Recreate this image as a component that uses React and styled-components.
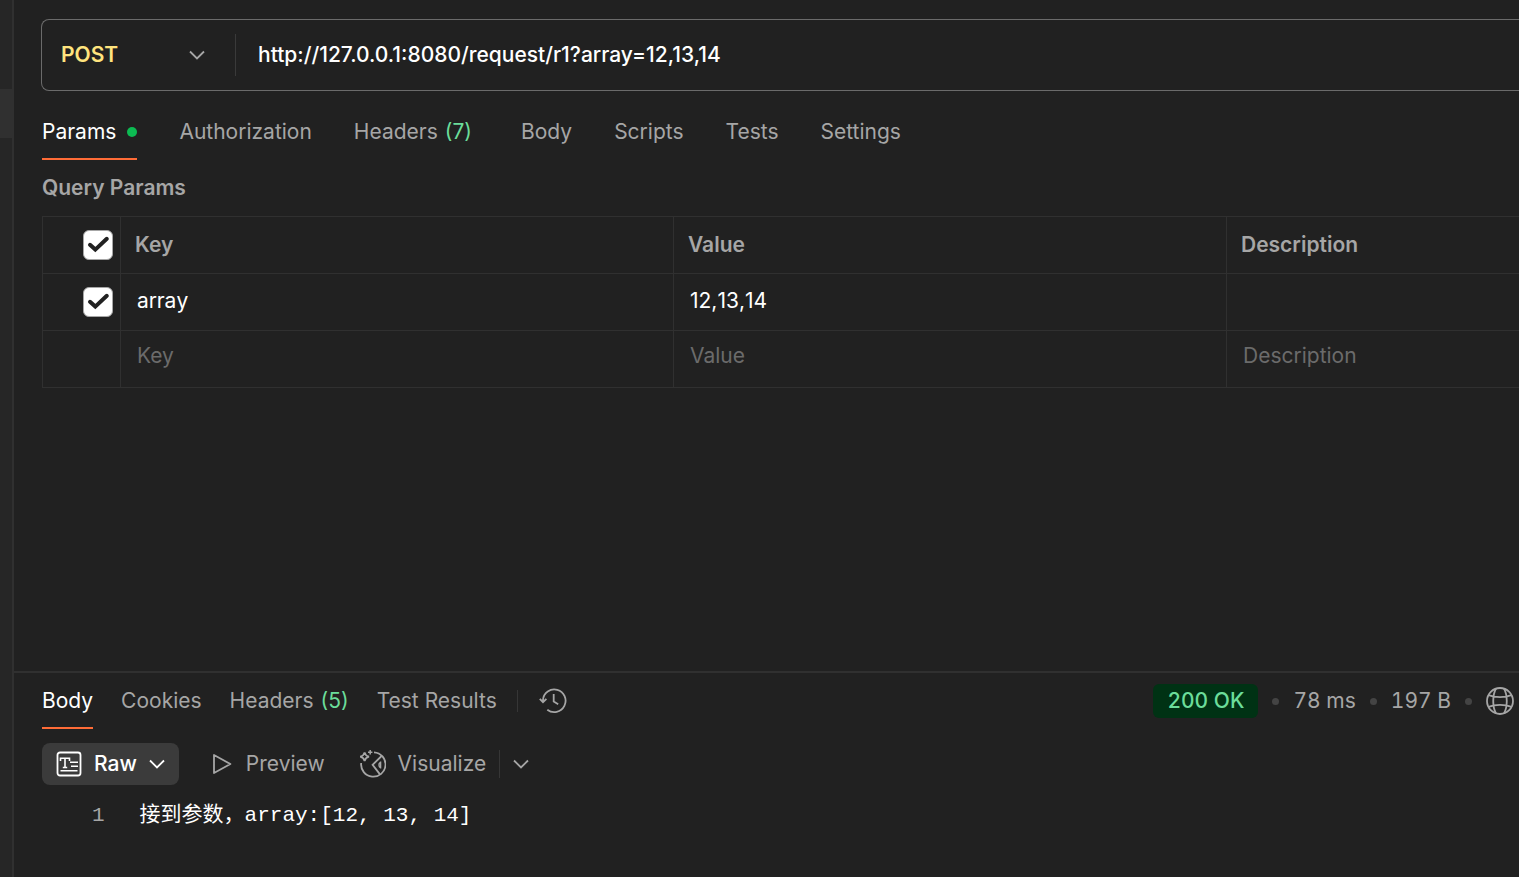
import React, { useState } from 'react';
import styled, { createGlobalStyle } from 'styled-components';

const c = {
  bg: '#212121',
  side: '#262626',
  sideActive: '#303030',
  line: '#303030',
  text: '#ffffff',
  muted: '#a6a6a6',
  faint: '#6b6b6b',
  green: '#6bdd9a',
  orange: '#ff6c37',
};

const GlobalStyle = createGlobalStyle`
  *, *::before, *::after { box-sizing: border-box; }
  body { margin: 0; background: ${c.bg}; color: ${c.text}; font-family: Inter, "Noto Sans CJK SC", sans-serif; font-size: 21px; line-height: 28px; }
  button, input, select { font: inherit; color: inherit; }
`;

const Page = styled.div`
  display: flex;
  min-height: 100vh;
  overflow: hidden;
`;

const Rail = styled.aside`
  flex: none;
  width: 14px;
  padding-top: 89px;
  background: ${c.side};
  border-right: 2px solid ${c.line};
`;

const RailItem = styled.div`
  height: 49px;
  background: ${c.sideActive};
`;

const Main = styled.main`
  flex: 1;
  min-width: 0;
  display: flex;
  flex-direction: column;
`;

const Request = styled.section`
  flex: 1;
  padding: 19px 0 0 28px;
`;

const UrlBar = styled.div`
  display: flex;
  align-items: center;
  height: 72px;
  margin-left: -1px;
  border: 1px solid #6b6b6b;
  border-right: 0;
  border-radius: 8px 0 0 8px;
`;

const MethodBox = styled.label`
  display: grid;
  flex: none;
  width: 194px;
  height: 42px;
  align-items: center;
  border-right: 1px solid #3a3a3a;
  & > * { grid-area: 1 / 1; }
  & > svg { justify-self: end; margin-right: 30px; pointer-events: none; }
`;

const MethodSelect = styled.select`
  appearance: none;
  width: 100%;
  height: 40px;
  padding: 0 0 0 19px;
  border: 0;
  outline: 0;
  background: transparent;
  color: #ffe47e;
  font-weight: 600;
`;

const UrlInput = styled.input`
  flex: 1;
  min-width: 0;
  height: 40px;
  padding: 0 0 1px 22px;
  border: 0;
  outline: 0;
  background: transparent;
  font-weight: 450;
`;

const Tabs = styled.nav`
  display: flex;
  align-items: stretch;
  gap: ${(p) => p.$gap}px;
`;

const Tab = styled.button`
  display: flex;
  align-items: center;
  gap: 7px;
  height: ${(p) => p.$height}px;
  padding: 0;
  border: 0;
  border-bottom: 2px solid ${(p) => (p.$active ? c.orange : 'transparent')};
  background: none;
  color: ${(p) => (p.$active ? c.text : c.muted)};
  white-space: nowrap;
  cursor: pointer;
`;

const RequestTabs = styled(Tabs)`
  margin-top: 14px;
`;

const ResponseTabs = styled(Tabs)`
  ${Tab} { padding-top: 2px; }
`;

const Count = styled.span`
  color: ${c.green};
`;

const ActiveDot = styled.span`
  width: 10px;
  height: 10px;
  margin-left: 4px;
  border-radius: 50%;
  background: #0cbb52;
`;

const Heading = styled.h2`
  margin: 14px 0;
  font-size: 21px;
  line-height: 28px;
  font-weight: 600;
  color: ${c.muted};
`;

const ParamTable = styled.table`
  width: 100%;
  table-layout: fixed;
  border-collapse: collapse;
  th, td { height: 57px; padding: 0; border: 1px solid ${c.line}; }
  tr > :last-child { border-right: 0; }
`;

const CheckCol = styled.col`
  width: 78px;
`;

const TextCol = styled.col`
  width: 553px;
`;

const HeadCell = styled.th`
  && { padding-left: 14px; }
  text-align: left;
  font-weight: 600;
  color: ${c.muted};
`;

const CellInput = styled.input`
  display: block;
  width: 100%;
  height: 56px;
  padding: 0 0 4px 16px;
  border: 0;
  outline: 0;
  background: transparent;
  font-kerning: none;
  &::placeholder { color: ${c.faint}; opacity: 1; }
`;

const EmptyInput = styled(CellInput)`
  padding-bottom: 8px;
  font-kerning: auto;
`;

const CheckLabel = styled.label`
  display: grid;
  width: 30px;
  margin-left: 40px;
  & > * { grid-area: 1 / 1; }
  & > svg { pointer-events: none; opacity: 0; }
  & > input:checked + svg { opacity: 1; }
`;

const CheckInput = styled.input`
  appearance: none;
  width: 30px;
  height: 30px;
  margin: 0;
  border: 1px solid #a6a6a6;
  border-radius: 6px;
  &:checked { background: #fff; }
`;

const Response = styled.section`
  height: 206px;
  padding-left: 28px;
  border-top: 2px solid ${c.line};
`;

const ResponseBar = styled.div`
  display: flex;
  align-items: stretch;
  justify-content: space-between;
  height: 56px;
`;

const BarGroup = styled.div`
  display: flex;
  align-items: center;
`;

const Divider = styled.span`
  width: 1px;
  height: ${(p) => p.$height}px;
  margin: 0 ${(p) => p.$after}px 0 ${(p) => p.$before}px;
  background: #363636;
`;

const IconButton = styled.button`
  display: flex;
  align-items: center;
  padding: 0;
  border: 0;
  background: none;
  color: ${c.muted};
  cursor: pointer;
`;

const Status = styled(BarGroup)`
  gap: 14px;
  padding-right: 5px;
  color: ${c.muted};
  font-variant-numeric: tabular-nums;
`;

const StatusBadge = styled.span`
  height: 34px;
  padding: 0 14px;
  border-radius: 6px;
  background: #003214;
  color: ${c.green};
  line-height: 34px;
  font-weight: 500;
`;

const Separator = styled.span`
  width: 7px;
  height: 7px;
  border-radius: 50%;
  background: #444;
`;

const ViewBar = styled.div`
  display: flex;
  align-items: center;
  height: 42px;
  margin-top: 14px;
`;

const ViewButton = styled.button`
  display: flex;
  align-items: center;
  gap: ${(p) => p.$gap}px;
  height: 42px;
  padding: 0 ${(p) => p.$pad}px;
  border: 0;
  border-radius: 8px;
  background: ${(p) => (p.$active ? '#3b3b3b' : 'none')};
  color: ${(p) => (p.$active ? c.text : c.muted)};
  font-weight: ${(p) => (p.$active ? 500 : 400)};
  cursor: pointer;
`;

const Code = styled.pre`
  display: flex;
  gap: 35px;
  margin: 17px 0 0;
  padding-left: 50px;
  font-family: "Liberation Mono", "Noto Sans CJK SC", monospace;
  font-size: 21px;
  line-height: 28px;
`;

const LineNumber = styled.span`
  color: ${c.muted};
`;

const CodeText = styled.code`
  font-family: inherit;
`;

const Svg = ({ w = 28, h = 28, children, ...rest }) => (
  <svg width={w} height={h} viewBox={`0 0 ${w} ${h}`} fill="none" stroke="currentColor" strokeWidth="1.8" aria-hidden="true" {...rest}>
    {children}
  </svg>
);

const Chevron = ({ color }) => (
  <Svg w={16} h={10} color={color}>
    <path d="M1 1.5 8 8.5 15 1.5" />
  </Svg>
);

const HistoryIcon = () => (
  <Svg>
    <path d="M4 14.5V13a11.3 11.3 0 1 1 4.3 9.7" />
    <path d="M.8 11.8 4 15.2 7.4 11.8M14.7 7v7.6l4.5 2.6" />
  </Svg>
);

const GlobeIcon = () => (
  <Svg>
    <circle cx="14" cy="14" r="13" />
    <path d="M10 1.6C6.3 8 6.3 20 10 26.4M18 1.6C21.7 8 21.7 20 18 26.4M2.6 8.2C9 10.8 19 10.8 25.4 8.2M2.6 19.8C9 17.2 19 17.2 25.4 19.8" />
  </Svg>
);

const RawIcon = () => (
  <Svg w={26} h={26}>
    <rect x="1.5" y="1.5" width="23" height="23" rx="2.5" />
    <path d="M4.5 10V7.2h9V10M9 7.2v9.3M6.8 16.5h4.4M14 11.3h8M15 15.2h7M4.5 19.8h17" strokeWidth="1.6" />
  </Svg>
);

const PlayIcon = () => (
  <Svg w={20} h={22}>
    <path d="M2 2v18L18.4 11Z" strokeLinejoin="round" />
  </Svg>
);

const VisualizeIcon = () => (
  <Svg>
    <path d="M16 2.3A12.2 12.2 0 1 1 3.2 13" />
    <path d="M23.6 6 14.6 14.8 22 24.4" />
    <path d="M22.6 11.6v6.8M22.6 12c-2.2 1.4-2.2 4.4 0 6" strokeWidth="1.4" />
    <path d="M6.6 2.4Q7.4 5.9 11 6.7 7.4 7.5 6.6 11 5.8 7.5 2.2 6.7 5.8 5.9 6.6 2.4Z" strokeWidth="1.8" />
    <path d="M12.2 0v4.4M10 2.2h4.4" strokeWidth="1.5" />
  </Svg>
);

const Checkbox = ({ label }) => (
  <CheckLabel>
    <CheckInput type="checkbox" defaultChecked aria-label={label} />
    <Svg w={30} h={30} color="#212121" strokeWidth="4">
      <path d="M7 14.8 12.3 19.6 23.8 8.8" strokeLinecap="round" />
    </Svg>
  </CheckLabel>
);

export default function App() {
  const [url, setUrl] = useState('http://127.0.0.1:8080/request/r1?array=12,13,14');
  return (
    <>
      <GlobalStyle />
      <Page>
        <Rail>
          <RailItem />
        </Rail>
        <Main>
          <Request>
            <UrlBar>
              <MethodBox>
                <MethodSelect aria-label="Method" defaultValue="POST">
                  <option>POST</option>
                </MethodSelect>
                <Chevron color={c.muted} />
              </MethodBox>
              <UrlInput aria-label="Request URL" value={url} onChange={(e) => setUrl(e.target.value)} />
            </UrlBar>
            <RequestTabs $gap={42}>
              <Tab $height={55} $active>
                Params <ActiveDot />
              </Tab>
              <Tab $height={55}>Authorization</Tab>
              <Tab $height={55}>
                Headers <Count>(7)</Count>
                <span />
              </Tab>
              <Tab $height={55}>Body</Tab>
              <Tab $height={55}>Scripts</Tab>
              <Tab $height={55}>Tests</Tab>
              <Tab $height={55}>Settings</Tab>
            </RequestTabs>
            <Heading>Query Params</Heading>
            <ParamTable>
              <colgroup>
                <CheckCol />
                <TextCol />
                <TextCol />
                <col />
              </colgroup>
              <thead>
                <tr>
                  <td><Checkbox label="Select all" /></td>
                  <HeadCell>Key</HeadCell>
                  <HeadCell>Value</HeadCell>
                  <HeadCell>Description</HeadCell>
                </tr>
              </thead>
              <tbody>
                <tr>
                  <td><Checkbox label="Use array" /></td>
                  <td><CellInput aria-label="Key" defaultValue="array" /></td>
                  <td><CellInput aria-label="Value" defaultValue="12,13,14" /></td>
                  <td><CellInput aria-label="Description" /></td>
                </tr>
                <tr>
                  <td />
                  <td><EmptyInput aria-label="New key" placeholder="Key" /></td>
                  <td><EmptyInput aria-label="New value" placeholder="Value" /></td>
                  <td><EmptyInput aria-label="New description" placeholder="Description" /></td>
                </tr>
              </tbody>
            </ParamTable>
          </Request>
          <Response>
            <ResponseBar>
              <BarGroup>
                <ResponseTabs $gap={28}>
                  <Tab $height={56} $active>Body</Tab>
                  <Tab $height={56}>Cookies</Tab>
                  <Tab $height={56}>
                    Headers <Count>(5)</Count>
                  </Tab>
                  <Tab $height={56}>Test Results</Tab>
                </ResponseTabs>
                <Divider $height={22} $before={20} $after={21} />
                <IconButton aria-label="History"><HistoryIcon /></IconButton>
              </BarGroup>
              <Status>
                <StatusBadge>200 OK</StatusBadge>
                <Separator />
                <span>78 ms</span>
                <Separator />
                <span>197 B</span>
                <Separator />
                <IconButton aria-label="Network"><GlobeIcon /></IconButton>
              </Status>
            </ResponseBar>
            <ViewBar>
              <ViewButton $pad={14} $gap={12} $active>
                <RawIcon />
                Raw
                <Chevron />
              </ViewButton>
              <ViewButton $pad={33} $gap={14}>
                <PlayIcon />
                Preview
              </ViewButton>
              <ViewButton $pad={0} $gap={12}>
                <VisualizeIcon />
                Visualize
              </ViewButton>
              <Divider $height={28} $before={13} $after={13} />
              <IconButton aria-label="More views"><Chevron /></IconButton>
            </ViewBar>
            <Code>
              <LineNumber>1</LineNumber>
              <CodeText>接到参数，array:[12, 13, 14]</CodeText>
            </Code>
          </Response>
        </Main>
      </Page>
    </>
  );
}
